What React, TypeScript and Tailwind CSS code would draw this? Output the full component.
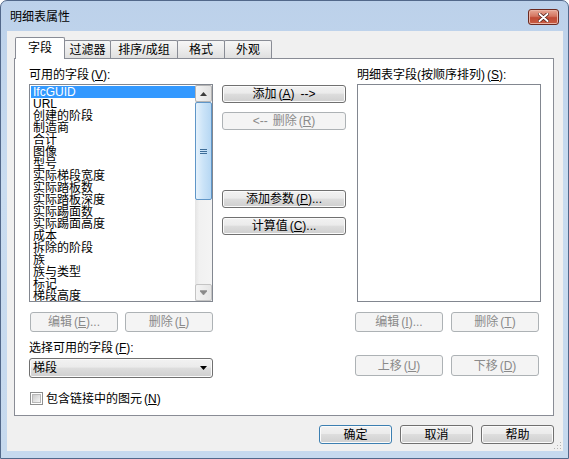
import React from "react";

const F = "font-['Liberation_Sans','Noto_Sans_CJK_SC',sans-serif]";

const btnOn =
  "border border-[#707070] rounded-[3px] bg-[linear-gradient(#f2f2f2,#ebebeb_45%,#dddddd_50%,#cfcfcf)] shadow-[inset_0_0_0_1px_#fbfbfb] text-black";
const btnOff = "border border-[#adb2b5] rounded-[3px] bg-[#f4f4f4] text-[#8a8a8a]";

function Btn({ className = "", off = false, children }: { className?: string; off?: boolean; children: React.ReactNode }) {
  return (
    <div className={`flex items-center justify-center text-[12px] leading-[12px] whitespace-nowrap ${off ? btnOff : btnOn} ${className}`}>
      {children}
    </div>
  );
}

// mnemonic key, e.g. (A)
function K({ c }: { c: string }) {
  return (
    <span className="ml-[2px]">
      (<span className="underline">{c}</span>)
    </span>
  );
}

const items = [
  "IfcGUID",
  "URL",
  "创建的阶段",
  "制造商",
  "合计",
  "图像",
  "型号",
  "实际梯段宽度",
  "实际踏板数",
  "实际踏板深度",
  "实际踢面数",
  "实际踢面高度",
  "成本",
  "拆除的阶段",
  "族",
  "族与类型",
  "标记",
  "梯段高度",
];

function Tab({ className = "", children }: { className?: string; children: React.ReactNode }) {
  return (
    <div
      className={`h-[18px] -ml-px border border-b-0 border-[#898c95] rounded-t-[2px] bg-[linear-gradient(#f6f6f6,#ececec_50%,#dfdfdf)] flex items-center justify-center text-[12px] ${className}`}
    >
      {children}
    </div>
  );
}

function ScrollBar() {
  return (
    <div className="w-[17px] h-full flex flex-col bg-[linear-gradient(90deg,#e4e4e4,#f1f1f1_25%,#f4f4f4)]">
      <div className="h-[17px] border border-[#b5b5b5] rounded-[2px] bg-[linear-gradient(90deg,#f4f4f4,#e2e2e2)] flex items-center justify-center">
        <svg width="7" height="4" viewBox="0 0 7 4">
          <path d="M3.5 0 L7 4 L0 4 Z" fill="#3c3c3c" />
        </svg>
      </div>
      <div className="h-[98px] border border-[#5f96c8] rounded-[2px] bg-[linear-gradient(90deg,#e6f2fc,#cce4f8_45%,#b6d7f3)] flex items-center justify-center">
        <svg width="7" height="7" viewBox="0 0 7 7">
          <path d="M0 1.5 H7 M0 3.5 H7 M0 5.5 H7" stroke="#3d6d99" strokeWidth="1" />
        </svg>
      </div>
      <div className="flex-1" />
      <div className="h-[17px] border border-[#c4c4c4] rounded-[2px] bg-[linear-gradient(90deg,#f4f4f4,#e6e6e6)] flex items-center justify-center">
        <svg width="7" height="5" viewBox="0 0 7 5">
          <path d="M0 0.5 H7 M0 1 L7 1 L3.5 5 Z" fill="#8a8a8a" stroke="#8a8a8a" strokeWidth="0.6" />
        </svg>
      </div>
    </div>
  );
}

export default function App() {
  return (
    <div className={`w-[569px] h-[459px] flex flex-col border border-[#52688a] rounded-t-[7px] overflow-hidden bg-[linear-gradient(#bcd1ea,#c9dcf0_40%,#c6d9ee)] text-black ${F}`}>
      {/* title bar */}
      <div className="h-[30px] shrink-0 flex items-center justify-between pl-[9px] pr-[9px] pt-[2px]">
        <span className="text-[12px]">明细表属性</span>
        <div className="w-[31px] h-[16px] rounded-[3px] border border-[#6b2a20] bg-[linear-gradient(#e8a896,#d47560_45%,#c04a35_55%,#c85c42)] flex items-center justify-center shadow-[inset_0_0_0_1px_#eab3a5]">
          <svg width="11" height="9" viewBox="0 0 11 9">
            <path d="M1.5 1 L9.5 8 M9.5 1 L1.5 8" stroke="#4a1a14" strokeWidth="3.4" strokeLinecap="round" />
            <path d="M1.5 1 L9.5 8 M9.5 1 L1.5 8" stroke="#ffffff" strokeWidth="2" strokeLinecap="round" />
          </svg>
        </div>
      </div>

      {/* client area */}
      <div className="relative ml-[6px] w-[556px] h-[420px] bg-[#f0f0f0] pt-[6px] pl-[7px] pr-[9px] text-[12px] leading-[12px]">
        {/* tabs */}
        <div className="relative z-10 h-[21px] flex items-end pl-[1px]">
          <div className="h-[22px] w-[50px] -mb-px border border-b-0 border-[#898c95] rounded-t-[2px] bg-white flex items-center justify-center text-[12px] pb-[2px]">
            字段
          </div>
          <Tab className="w-[47px]">过滤器</Tab>
          <Tab className="w-[68px]">排序/成组</Tab>
          <Tab className="w-[48px]">格式</Tab>
          <Tab className="w-[48px]">外观</Tab>
        </div>

        {/* tab panel */}
        <div className="h-[358px] border border-[#898c95] bg-white flex pl-[14px] pt-[10px]">
          {/* left column */}
          <div className="w-[184px] flex flex-col">
            <div className="h-[12px]">
              可用的字段<K c="V" />:
            </div>
            <div className="mt-[3px] h-[218px] border border-[#828790] bg-white flex">
              <div className="flex-1 pt-[1px] pl-[1px] overflow-hidden">
                {items.map((it, i) => (
                  <div
                    key={it}
                    className={`h-[12px] leading-[12px] pl-[2px] whitespace-nowrap ${i === 0 ? "bg-[#3399ff] text-white" : ""}`}
                  >
                    {it}
                  </div>
                ))}
              </div>
              <ScrollBar />
            </div>
            <div className="mt-[10px] flex justify-between">
              <Btn off className="ml-[1px] w-[88px] h-[20px]">
                编辑<K c="E" />...
              </Btn>
              <Btn off className="w-[88px] h-[20px]">
                删除<K c="L" />
              </Btn>
            </div>
            <div className="mt-[10px] h-[12px]">
              选择可用的字段<K c="F" />:
            </div>
            <div className="mt-[4px] h-[20px] border border-[#707070] rounded-[3px] bg-[linear-gradient(#f2f2f2,#ebebeb_45%,#dddddd_50%,#cfcfcf)] shadow-[inset_0_0_0_1px_#fbfbfb] flex items-center justify-between pl-[3px] pr-[5px]">
              <span>梯段</span>
              <svg width="7" height="4" viewBox="0 0 7 4">
                <path d="M0 0 L7 0 L3.5 4 Z" fill="#000" />
              </svg>
            </div>
            <div className="mt-[14px] h-[13px] flex items-center">
              <div className="ml-[1px] w-[13px] h-[13px] border border-[#8e8f8f] bg-white p-[1px]">
                <div className="w-full h-full bg-[linear-gradient(135deg,#cbcbcb,#f6f6f6)] border border-[#b8b8b8]" />
              </div>
              <span className="ml-[3px]">
                包含链接中的图元<K c="N" />
              </span>
            </div>
          </div>

          {/* middle column */}
          <div className="ml-[9px] w-[124px] pt-[16px] flex flex-col">
            <Btn className="h-[18px]">
              添加<K c="A" />
              <span className="ml-[6px]">--&gt;</span>
            </Btn>
            <Btn off className="mt-[9px] h-[18px]">
              <span className="mr-[5px]">&lt;--</span>删除<K c="R" />
            </Btn>
            <Btn className="mt-[60px] h-[18px]">
              添加参数<K c="P" />...
            </Btn>
            <Btn className="mt-[9px] h-[18px]">
              计算值<K c="C" />...
            </Btn>
          </div>

          {/* right column */}
          <div className="ml-[11px] w-[184px] flex flex-col">
            <div className="h-[12px] whitespace-nowrap">
              明细表字段(按顺序排列)<K c="S" />:
            </div>
            <div className="mt-[3px] h-[218px] border border-[#828790] bg-white" />
            <div className="mt-[10px] -ml-[2px] flex gap-[8px]">
              <Btn off className="w-[88px] h-[20px]">
                编辑<K c="I" />...
              </Btn>
              <Btn off className="w-[88px] h-[20px]">
                删除<K c="T" />
              </Btn>
            </div>
            <div className="mt-[23px] -ml-[2px] flex gap-[8px]">
              <Btn off className="w-[88px] h-[21px]">
                上移<K c="U" />
              </Btn>
              <Btn off className="w-[88px] h-[21px]">
                下移<K c="D" />
              </Btn>
            </div>
          </div>
        </div>

        {/* dialog buttons */}
        <div className="mt-[9px] flex justify-end gap-[8px]">
          <Btn className="w-[73px] h-[19px] !border-[#3c7fb1] shadow-[inset_0_0_0_1px_#9fd9f6]">确定</Btn>
          <Btn className="w-[73px] h-[19px]">取消</Btn>
          <Btn className="w-[73px] h-[19px]">帮助</Btn>
        </div>

        {/* resize grip */}
        <svg className="absolute right-[1px] bottom-[1px]" width="10" height="10" viewBox="0 0 10 10">
          {[
            [8, 2],
            [5, 5],
            [8, 5],
            [2, 8],
            [5, 8],
            [8, 8],
          ].map(([x, y]) => (
            <rect key={`${x}-${y}`} x={x} y={y} width="1" height="1" fill="#b5b5b5" />
          ))}
        </svg>
      </div>
    </div>
  );
}
